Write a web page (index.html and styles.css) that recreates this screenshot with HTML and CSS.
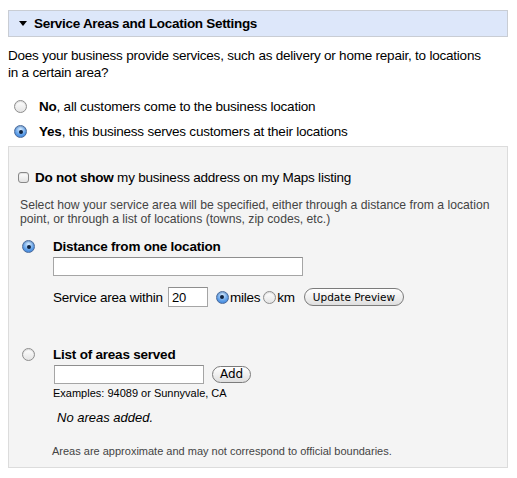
FILE: index.html
```html
<!DOCTYPE html>
<html lang="en">
  <head>
    <meta charset="UTF-8">
    <title>Service Areas and Location Settings</title>
    <link rel="stylesheet" href="styles.css">
  </head>
  <body>
    <div class="section">
      <div class="section-head">
        <span class="arrow"></span>
        <span class="section-title">Service Areas and Location Settings</span>
      </div>

      <p class="question">Does your business provide services, such as delivery or home repair, to locations in a certain area?</p>

      <label class="choice">
        <input type="radio" name="serves" class="radio">
        <span><b>No</b>, all customers come to the business location</span>
      </label>
      <label class="choice">
        <input type="radio" name="serves" class="radio" checked>
        <span><b>Yes</b>, this business serves customers at their locations</span>
      </label>

      <div class="panel">
        <label class="hide-address">
          <input type="checkbox" class="check">
          <span><b>Do not show</b> my business address on my Maps listing</span>
        </label>

        <p class="hint">Select how your service area will be specified, either through a distance from a location point, or through a list of locations (towns, zip codes, etc.)</p>

        <div class="option">
          <input type="radio" name="mode" class="radio" checked>
          <div class="option-body">
            <div class="option-title">Distance from one location</div>
            <input type="text" class="field field-wide">
            <div class="within">
              <span>Service area within</span>
              <input type="text" class="field field-num" value="20">
              <label class="unit"><input type="radio" name="unit" class="radio" checked>miles</label>
              <label class="unit"><input type="radio" name="unit" class="radio">km</label>
              <button class="pill">Update Preview</button>
            </div>
          </div>
        </div>

        <div class="option option-list">
          <input type="radio" name="mode" class="radio">
          <div class="option-body">
            <div class="option-title">List of areas served</div>
            <div class="add-row">
              <input type="text" class="field field-area">
              <button class="pill pill-add">Add</button>
            </div>
            <div class="examples">Examples: 94089 or Sunnyvale, CA</div>
            <div class="empty">No areas added.</div>
          </div>
        </div>

        <p class="note">Areas are approximate and may not correspond to official boundaries.</p>
      </div>
    </div>
  </body>
</html>
```

FILE: styles.css
```css
html, body {
  margin: 0;
  padding: 0;
  background: #fff;
  color: #000;
  font-family: "Liberation Sans", Arial, sans-serif;
  font-size: 13.5px;
  letter-spacing: -0.22px;
}
.section {
  width: 500px;
  padding: 10px 0 0 8px;
}
.section-head {
  display: flex;
  align-items: center;
  height: 25px;
  background-color: #dde7fa;
  border: 1px solid #c9cdd4;
}
.arrow {
  width: 0;
  height: 0;
  margin: 0 7px 0 10px;
  border-left: 4px solid transparent;
  border-right: 4px solid transparent;
  border-top: 5px solid #000;
}
.section-title {
  font-weight: bold;
  letter-spacing: -0.3px;
}
.question {
  width: 485px;
  margin: 10px 0 13px;
  line-height: 17px;
}
.choice {
  display: flex;
  align-items: center;
  height: 25px;
}
.choice .radio {
  margin: 0 12px 0 6px;
}

/* aqua style radios and checkbox */
.radio {
  appearance: none;
  -webkit-appearance: none;
  flex: none;
  width: 13px;
  height: 13px;
  margin: 0;
  border: 1px solid #8d8d8d;
  border-radius: 50%;
  background: linear-gradient(#ffffff, #e4e4e4);
  box-shadow: inset 0 1px 1px rgba(0, 0, 0, 0.15);
  position: relative;
}
.radio:checked {
  border-color: #4a6a9a;
  background: radial-gradient(circle at 50% 30%, #d6ebff, #5d9ee8 60%, #3577cf);
}
.radio:checked::after {
  content: "";
  position: absolute;
  left: 3.5px;
  top: 3.5px;
  width: 4px;
  height: 4px;
  border-radius: 50%;
  background: #10233f;
}
.check {
  appearance: none;
  -webkit-appearance: none;
  flex: none;
  width: 11px;
  height: 11px;
  margin: 0 6px 0 0;
  border: 1px solid #888;
  border-radius: 3px;
  background: linear-gradient(#ffffff, #e2e2e2);
  box-shadow: inset 0 1px 1px rgba(0, 0, 0, 0.12);
}

.panel {
  margin-top: 2px;
  padding: 23px 10px 10px 9px;
  background-color: #f4f4f4;
  border: 1px solid #dcdcdc;
}
.hide-address {
  display: flex;
  align-items: center;
}
.hint {
  margin: 13px 0 0 2px;
  color: #444;
  font-size: 12.2px;
  letter-spacing: 0;
  line-height: 14px;
}
.option {
  display: flex;
  align-items: flex-start;
  margin-top: 13px;
  padding-left: 4px;
}
.option > .radio {
  margin: 1px 18px 0 0;
}
.option-title {
  font-weight: bold;
  line-height: 16px;
}
.field {
  box-sizing: border-box;
  margin: 0;
  padding: 1px 3px;
  border: 1px solid #a5a5a5;
  border-top-color: #8e8e8e;
  background: #fff;
  font-family: "Liberation Sans", Arial, sans-serif;
  font-size: 13px;
  outline: none;
}
.field-wide {
  display: block;
  width: 250px;
  height: 19px;
  margin-top: 2px;
}
.within {
  display: flex;
  align-items: center;
  margin-top: 11px;
}
.field-num {
  width: 40px;
  height: 20px;
  margin: 0 8px 0 5px;
}
.unit {
  display: flex;
  align-items: center;
  margin-right: 3px;
}
.unit .radio {
  margin-right: 1px;
}
.pill {
  margin: 0 0 0 6px;
  padding: 0 8px;
  height: 18px;
  border: 1px solid #7b7b7b;
  border-radius: 9px;
  background: linear-gradient(#ffffff, #f0f0f0 50%, #dedede);
  font-family: "DejaVu Sans", sans-serif;
  font-size: 10.5px;
  letter-spacing: 0;
  color: #000;
  line-height: 15px;
}
.option-list {
  margin-top: 40px;
}
.add-row {
  display: flex;
  align-items: center;
  margin-top: 2px;
}
.field-area {
  width: 150px;
  height: 19px;
  margin-left: 1px;
}
.pill-add {
  margin-left: 8px;
  height: 17px;
  font-size: 12px;
  padding: 0 7px;
}
.examples {
  margin-top: 2px;
  font-size: 11px;
  letter-spacing: 0;
  line-height: 14px;
}
.empty {
  margin: 10px 0 0 4px;
  font-style: italic;
  font-size: 13px;
  letter-spacing: 0;
}
.note {
  margin: 20px 0 0 34px;
  color: #444;
  font-size: 11px;
  letter-spacing: 0;
}
```
